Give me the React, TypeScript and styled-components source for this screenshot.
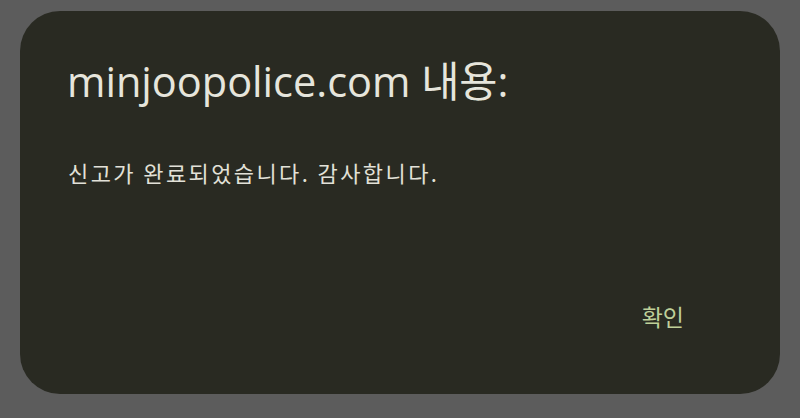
import React from "react";
import styled, { createGlobalStyle } from "styled-components";

const Global = createGlobalStyle`
  html, body { margin: 0; padding: 0; background: #5c5c5c; }
  #root { width: 800px; height: 418px; }
`;

const Page = styled.div`
  width: 800px;
  height: 418px;
  box-sizing: border-box;
  padding: 11px 20px 24px 20px;
  display: flex;
  background: #5c5c5c;
`;

const Dialog = styled.div`
  flex: 1;
  background: #292a22;
  border-radius: 40px;
  display: flex;
  flex-direction: column;
  padding: 46px 48px 0 47px;
`;

const Title = styled.h1`
  margin: 0;
  font-family: "Open Sans", "Noto Sans CJK KR", sans-serif;
  font-weight: 400;
  font-size: 41.5px;
  line-height: 48px;
  color: #e6e5dc;
  letter-spacing: 0;
`;

const Message = styled.p`
  margin: 52px 0 0 1px;
  font-family: "Noto Sans CJK KR", sans-serif;
  font-size: 22px;
  line-height: 30px;
  letter-spacing: 2.4px;
  color: #e2e1d8;
`;

const Actions = styled.div`
  margin-top: auto;
  margin-bottom: 63px;
  display: flex;
  justify-content: flex-end;
`;

const Button = styled.button`
  border: none;
  background: none;
  padding: 0;
  margin-right: 48px;
  font-family: "Noto Sans CJK KR", sans-serif;
  font-size: 23px;
  line-height: 30px;
  letter-spacing: 0;
  color: #bfd09a;
  cursor: pointer;
`;

export default function App() {
  return (
    <>
      <Global />
      <Page>
        <Dialog>
          <Title>minjoopolice.com 내용:</Title>
          <Message>신고가 완료되었습니다. 감사합니다.</Message>
          <Actions>
            <Button>확인</Button>
          </Actions>
        </Dialog>
      </Page>
    </>
  );
}
